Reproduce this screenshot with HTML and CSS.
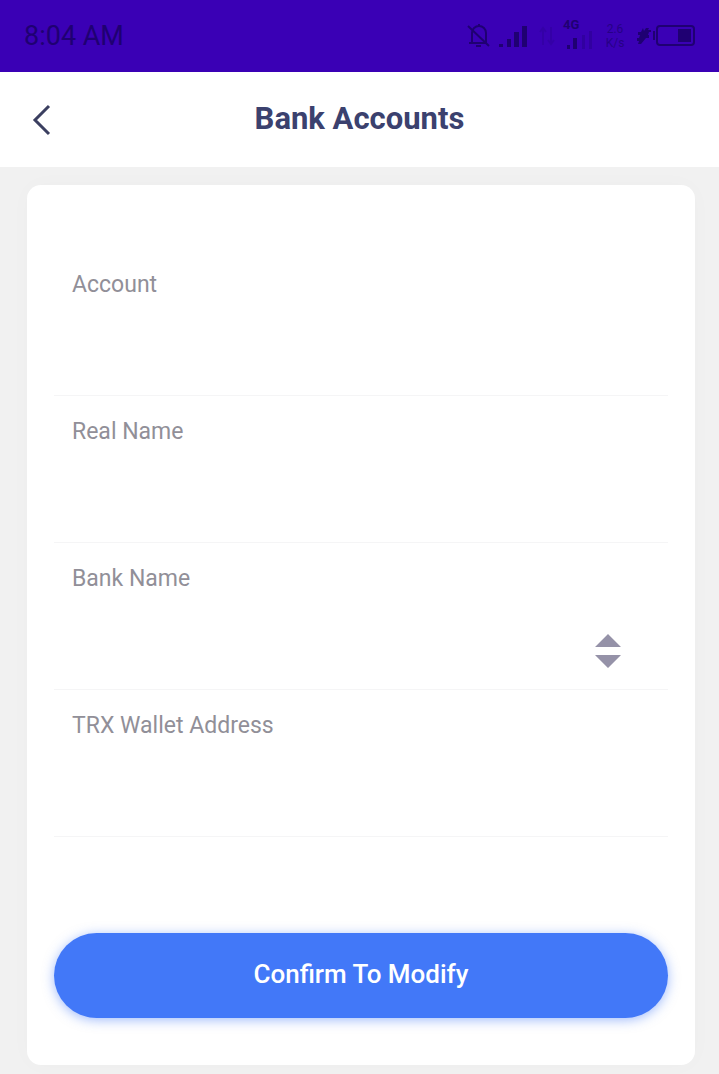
FILE: index.html
```html
<!DOCTYPE html>
<html lang="en">
<head>
    <meta charset="UTF-8">
    <meta name="viewport" content="width=device-width, initial-scale=1.0">
    <title>Bank Accounts</title>
    <link rel="stylesheet" href="styles.css">
</head>
<body>
    <!-- Status bar -->
    <div class="status-bar">
        <span class="time">8:04 AM</span>
        <div class="status-icons">
            <svg class="bell" width="24" height="26" viewBox="0 0 24 26" fill="none" stroke="currentColor" stroke-width="2">
                <path d="M5 20V10a7 7 0 0 1 14 0v10M2 20h18M9 23h5M12 4V1M1 3l21 20"/>
            </svg>
            <svg class="signal" width="28" height="22" viewBox="0 0 28 22" fill="currentColor">
                <path d="M0 19h4v3H0zM8 14h4v8H8zM15 7h5v15h-5zM23 1h5v21h-5z"/>
            </svg>
            <svg class="arrows" width="16" height="20" viewBox="0 0 16 20" fill="none" stroke="currentColor" stroke-width="2">
                <path d="M4 19V2M1 6l3-4 3 4M12 1v17M9 14l3 4 3-4"/>
            </svg>
            <div class="network">
                <span>4G</span>
                <svg width="30" height="18" viewBox="0 0 30 18" fill="currentColor">
                    <path d="M4 14h3v4H4zM10 7h4v11h-4z"/>
                    <path opacity=".3" d="M19 4h3v14h-3zM26 0h3v18h-3z"/>
                </svg>
            </div>
            <div class="speed"><span>2.6</span><span>K/s</span></div>
            <div class="power">
                <svg width="14" height="16" viewBox="0 0 14 16" fill="currentColor">
                    <path d="M6 0 4 4H1v3h2l-1 3H0v3h2l-1 3h3l5-6h3V7h-1l1-3h2V2h-3l1-2H9L7 3z"/>
                </svg>
                <svg width="42" height="22" viewBox="0 0 42 22" fill="none" stroke="currentColor" stroke-width="2">
                    <rect x="4" y="1" width="37" height="19" rx="3"/>
                    <path d="M1 6v9"/>
                    <path fill="currentColor" stroke="none" d="M25 4h13v13H25z"/>
                </svg>
            </div>
        </div>
    </div>

    <!-- Page title -->
    <header class="header">
        <a class="back" href="#" aria-label="Back">
            <svg width="20" height="32" viewBox="0 0 20 32" fill="none" stroke="currentColor" stroke-width="3">
                <path d="M17 2 3 16l14 14"/>
            </svg>
        </a>
        <h1>Bank Accounts</h1>
    </header>

    <!-- Bank form -->
    <main>
        <form class="card">
            <div class="field">
                <label for="account">Account</label>
                <input type="text" id="account">
            </div>
            <div class="field">
                <label for="realName">Real Name</label>
                <input type="text" id="realName">
            </div>
            <div class="field">
                <label for="bankName">Bank Name</label>
                <div class="select-box">
                    <select id="bankName"></select>
                    <svg width="28" height="36" viewBox="0 0 28 36" fill="currentColor">
                        <path d="M14 1l13 13H1zM1 22h26L14 35z"/>
                    </svg>
                </div>
            </div>
            <div class="field">
                <label for="wallet">TRX Wallet Address</label>
                <input type="text" id="wallet">
            </div>
            <button type="button" class="confirm">Confirm To Modify</button>
        </form>
    </main>
</body>
</html>
```
FILE: styles.css
```css
* {
    margin: 0;
    padding: 0;
    box-sizing: border-box;
}

body {
    font-family: Roboto, "Liberation Sans", sans-serif;
    background-color: #f1f1f1;
}

svg {
    display: block;
}

/* Status bar */
.status-bar {
    display: flex;
    justify-content: space-between;
    align-items: center;
    height: 72px;
    padding: 0 24px;
    background-color: #3a00b5;
    color: #1f0072;
}

.time {
    font-size: 27px;
    line-height: 32px;
}

.status-icons {
    display: flex;
    align-items: center;
    gap: 12px;
}

.bell {
    margin-right: -4px;
}

.arrows {
    opacity: 0.2;
}

.network {
    margin-left: -4px;
    padding-bottom: 4px;
    font-size: 13px;
    font-weight: 700;
    line-height: 12px;
}

.speed {
    display: flex;
    flex-direction: column;
    width: 20px;
    font-size: 12px;
    line-height: 14px;
    text-align: center;
    opacity: 0.7;
}

.power {
    display: flex;
    align-items: center;
    gap: 2px;
}

/* Title bar */
.header {
    display: grid;
    grid-template-columns: 20px 1fr 20px;
    align-items: center;
    height: 95px;
    padding: 0 32px;
    background-color: #fff;
    color: #3b416e;
}

.back {
    color: #3b3f60;
}

h1 {
    padding-bottom: 2px;
    font-size: 31px;
    font-weight: 700;
    line-height: 40px;
    text-align: center;
}

/* Form card */
main {
    padding: 18px 24px 9px 27px;
}

.card {
    padding: 64px 27px 47px;
    background-color: #fff;
    border-radius: 14px;
    box-shadow: 0 0 24px rgba(0, 0, 0, 0.02);
}

.field {
    display: flex;
    flex-direction: column;
    height: 147px;
    padding: 20px 18px 0;
    border-bottom: 1px solid #f5f5f6;
}

label {
    color: #918f98;
    font-size: 23px;
    line-height: 32px;
}

input,
select {
    flex: 1;
    width: 100%;
    border: none;
    outline: none;
    background: transparent;
    color: #3b416e;
    font: inherit;
    font-size: 23px;
    appearance: none;
}

.select-box {
    position: relative;
    display: flex;
    flex: 1;
}

/* Arrows drawn over the select */
.select-box svg {
    position: absolute;
    top: 38px;
    right: 28px;
    color: #9592a8;
    pointer-events: none;
}

.confirm {
    display: block;
    width: 100%;
    height: 85px;
    margin-top: 96px;
    padding-bottom: 4px;
    border: none;
    border-radius: 43px;
    background-color: #4278f8;
    box-shadow: 0 2px 12px rgba(66, 120, 248, 0.5);
    color: #fff;
    font-family: inherit;
    font-size: 26px;
    font-weight: 500;
    cursor: pointer;
}
```
